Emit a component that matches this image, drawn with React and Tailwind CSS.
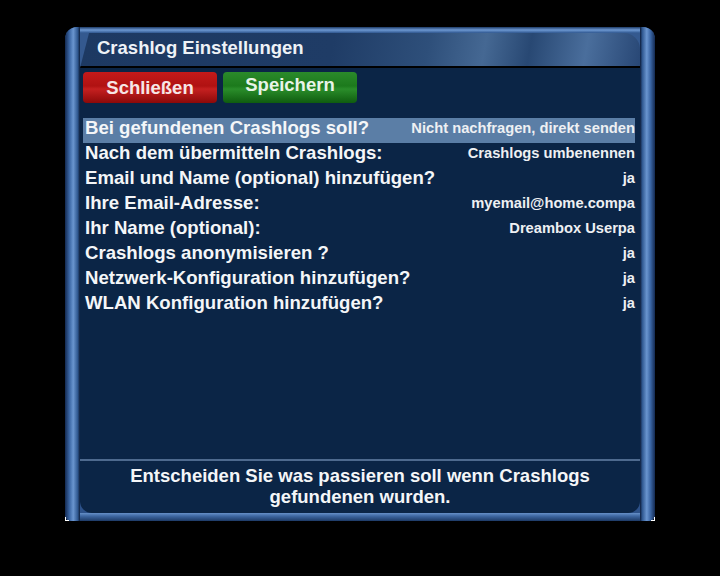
import React from "react";

const rows = [
  { label: "Bei gefundenen Crashlogs soll?", value: "Nicht nachfragen, direkt senden", active: true },
  { label: "Nach dem übermitteln Crashlogs:", value: "Crashlogs umbenennen" },
  { label: "Email und Name (optional) hinzufügen?", value: "ja" },
  { label: "Ihre Email-Adresse:", value: "myemail@home.compa" },
  { label: "Ihr Name (optional):", value: "Dreambox Userpa" },
  { label: "Crashlogs anonymisieren ?", value: "ja" },
  { label: "Netzwerk-Konfiguration hinzufügen?", value: "ja" },
  { label: "WLAN Konfiguration hinzufügen?", value: "ja" },
];

const SettingRow = ({ label, value, active }) => (
  <div
    className={`h-[25px] flex items-center justify-between ${
      active ? "bg-[#5b7ea6]" : ""
    }`}
  >
    <span className="pl-[2px] -mt-[4px] text-[18.6px] leading-none text-[#f4f6f8]">{label}</span>
    <span className="-mt-[5px] text-[14.7px] leading-none text-[#eef0f3]">{value}</span>
  </div>
);

export default function App() {
  return (
    <div
      className="relative w-[720px] h-[576px] bg-black pt-[27px] pl-[65px] font-bold"
      style={{ fontFamily: '"Liberation Sans", Arial, sans-serif' }}
    >
      <div className="flex w-[590px] h-[494px] rounded-t-[12px] rounded-b-[6px] overflow-hidden bg-[#2c5189]">
        {/* left pillar */}
        <div className="w-[15px] bg-[linear-gradient(to_right,#132a52,#3b66a4_30%,#6a95cf_55%,#2f578f_85%,#0d1d3a)]" />

        <div className="flex-1 flex flex-col">
          {/* top tube */}
          <div className="h-[6px] bg-[linear-gradient(to_bottom,#1d3a66,#6d98d2_50%,#2f578f)]" />

          <div className="flex-1 flex flex-col rounded-b-[12px] bg-[#0b2546] overflow-hidden">
            <div className="bg-[#34598f]">
              <div className="h-[35px] border-b-2 border-black rounded-tr-[16px] bg-[linear-gradient(100deg,#1d3962_0%,#1f3c66_45%,#2e4f7a_62%,#456893_72%,#284873_80%,#4a6e9c_90%,#284775_100%)] [clip-path:polygon(9px_0,100%_0,100%_100%,0_100%)] flex items-center pl-[17px]">
                <span className="text-[18.5px] leading-none text-[#eef2f7] -mt-[2px]">
                  Crashlog Einstellungen
                </span>
              </div>
            </div>

            <div className="flex gap-[6px] mt-[4px] ml-[3px]">
              <button className="w-[134px] h-[31px] rounded-[4px] bg-[linear-gradient(to_bottom,#c41a1a,#b01212_45%,#c52020_55%,#8c0909)] text-[18.5px] leading-none text-[#f6e6e6] pt-[1px]">
                Schließen
              </button>
              <button className="w-[134px] h-[31px] rounded-[4px] bg-[linear-gradient(to_bottom,#2b8a2b,#1c7a1c_45%,#2a8d2a_55%,#0f5c0f)] text-[18.5px] leading-none text-[#e8f4e8] pb-[5px]">
                Speichern
              </button>
            </div>

            <div className="mt-[15px] pl-[3px] pr-[5px] flex flex-col">
              {rows.map((r) => (
                <SettingRow key={r.label} {...r} />
              ))}
            </div>

            <div className="flex-1" />

            <div className="h-[2px] bg-[#4e6a8e]" />
            <div className="pt-[4px] pb-[6px] text-center text-[18.5px] leading-[21px] text-[#f4f6f8]">
              <p>Entscheiden Sie was passieren soll wenn Crashlogs</p>
              <p>gefundenen wurden.</p>
            </div>
          </div>

          {/* bottom tube */}
          <div className="h-[8px] bg-[linear-gradient(to_bottom,#6690c8,#3d66a0_40%,#1d3a66)]" />
        </div>

        {/* right pillar */}
        <div className="w-[15px] bg-[linear-gradient(to_right,#0d1d3a,#2f578f_15%,#6a95cf_45%,#3b66a4_70%,#132a52)]" />
      </div>

      {/* corner marks */}
      <div className="absolute left-[65px] top-[517px] w-[4px] h-[4px] border-l border-b border-white" />
      <div className="absolute left-[651px] top-[517px] w-[4px] h-[4px] border-r border-b border-white" />
    </div>
  );
}
